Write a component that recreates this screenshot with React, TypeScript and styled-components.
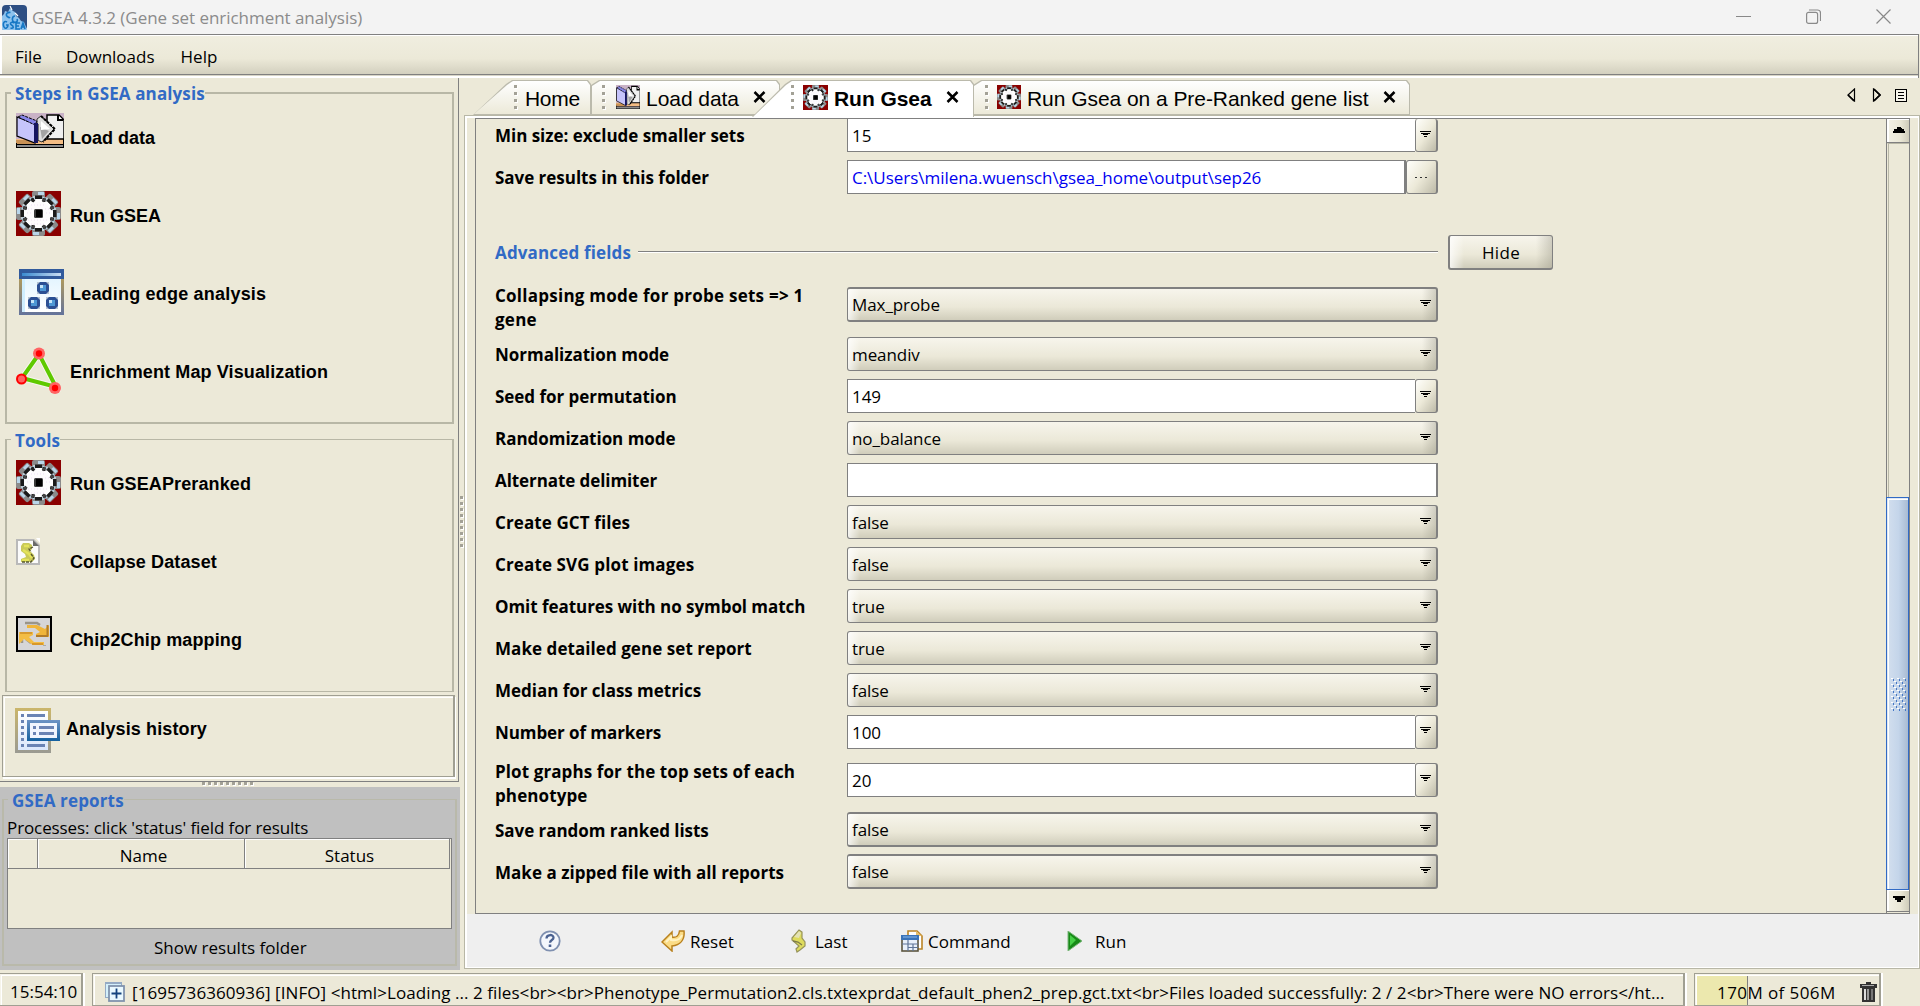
import React from 'react';
import styled, { createGlobalStyle, css } from 'styled-components';

const BG = '#ece9d8';
const EDGE = '#808080';
const SOFT = '#b8b7a6';
const UI = '"Open Sans", "Noto Sans", sans-serif';
const ARIAL = '"Liberation Sans", Arial, sans-serif';

const GlobalStyle = createGlobalStyle`
  * { box-sizing: border-box; }
  body { margin: 0; background: ${BG}; overflow: hidden; }
  svg { display: block; flex: none; }
`;

const Window = styled.div`
  width: 1920px;
  height: 1006px;
  display: flex;
  flex-direction: column;
  background: ${BG};
  font: 17px/22px ${UI};
  color: #000;
  white-space: nowrap;
  overflow: hidden;
`;

/* ---------- title and menu bars ---------- */

const TitleBar = styled.header`
  height: 34px;
  flex: none;
  display: flex;
  align-items: center;
  padding: 0 29px 0 2px;
  background: #f3f3f3;
  color: #8b8b8b;
`;
const WindowTitle = styled.span`
  flex: 1;
  margin-left: 5px;
  padding-top: 1px;
  letter-spacing: -0.04px;
`;
const WindowButtons = styled.div`
  display: flex;
  align-items: center;
  gap: 55px;
  padding-bottom: 1px;
`;
const MenuBar = styled.nav`
  height: 44px;
  flex: none;
  display: flex;
  align-items: center;
  gap: 24px;
  padding: 2px 0 0 15px;
  margin-right: 1px;
  border-top: 1px solid ${EDGE};
  border-right: 1px solid ${EDGE};
  background:
    linear-gradient(#fff, #fff) 0 0 / 100% 1px no-repeat,
    linear-gradient(#fff, #fff) 0 0 / 2px 39px no-repeat,
    linear-gradient(${EDGE}, ${EDGE}) 0 39px / 100% 1px no-repeat,
    linear-gradient(#d8d5c6, #d8d5c6) 0 40px / 100% 1px no-repeat,
    linear-gradient(#fff, #fff) 0 41px / 100% 2px no-repeat,
    linear-gradient(#f0eee0 0, ${BG} 55%, #d2cfbe 92%);
`;
const MenuItem = styled.span<{ $gap?: number }>`
  margin: 0 ${p => p.$gap ?? 0}px 1px 0;
`;

/* ---------- left side ---------- */

const Body = styled.div`
  flex: 1;
  min-height: 0;
  display: flex;
`;
const Side = styled.aside`
  width: 460px;
  flex: none;
  display: flex;
  flex-direction: column;
`;
const StepsPane = styled.div`
  width: 459px;
  height: 704px;
  flex: none;
  padding-top: 14px;
  border-right: 1px solid ${EDGE};
  border-bottom: 1px solid ${EDGE};
`;
const Group = styled.section<{ $height: number; $thin?: boolean }>`
  width: 449px;
  height: ${p => p.$height}px;
  margin: 0 0 15px 5px;
  border: 2px solid ${SOFT};
  border-top-width: ${p => (p.$thin ? 1 : 2)}px;
  border-bottom-width: ${p => (p.$thin ? 1 : 2)}px;
`;
const GroupTitle = styled.h2<{ $bg?: string; $lift?: number; $after?: number; $tight?: number }>`
  width: fit-content;
  height: 20px;
  margin: -${p => p.$lift ?? 10}px 0 ${p => p.$after ?? 9}px 4px;
  padding-left: 4px;
  background: ${p => p.$bg ?? BG};
  color: #316ac5;
  font: 700 17px/20px ${UI};
  letter-spacing: ${p => p.$tight ?? 0.12}px;
`;
const StepRow = styled.div`
  height: 78px;
  display: flex;
  align-items: flex-start;
  padding-left: 9px;
`;
const IconSlot = styled.span<{ $width?: number; $indent?: number }>`
  width: ${p => p.$width ?? 54}px;
  flex: none;
  padding-left: ${p => p.$indent ?? 0}px;
`;
const StepLabel = styled.span<{ $drop?: number; $track?: number }>`
  margin-top: ${p => p.$drop ?? 14}px;
  font: 700 18px/22px ${ARIAL};
  letter-spacing: ${p => p.$track ?? 0.12}px;
`;
const HistoryBox = styled.div`
  width: 453px;
  height: 82px;
  margin: -12px 0 0 2px;
  padding: 12px 0 0 12px;
  display: flex;
  align-items: flex-start;
  border: 1px solid #a09f92;
  border-right-width: 2px;
  box-shadow: inset 1px 1px 0 #f4f2e8, inset 2px 2px 0 #fff, 1px 2px 0 #fff;
`;
const GripRow = styled.div`
  height: 5px;
  flex: none;
  padding-left: 202px;
  display: flex;
  gap: 3px;
`;
const GripColumn = styled.div`
  width: 4px;
  padding-top: 418px;
  display: flex;
  flex-direction: column;
  gap: 3px;
`;
const Dot = styled.i`
  width: 3px;
  height: 3px;
  flex: none;
  background: #a3a196;
  box-shadow: 1px 1px 0 #fff;
`;
const Reports = styled.section`
  height: 183px;
  flex: none;
  padding: 12px 3px 4px 2px;
  background: #c0c0c0;
`;
const ReportsFrame = styled.div`
  height: 167px;
  border: 2px solid #b9b9aa;
  border-top-width: 1px;
`;
const ReportsHint = styled.div`
  margin: 6px 0 0 3px;
  height: 21px;
  line-height: 22px;
  letter-spacing: -0.1px;
`;
const Table = styled.div`
  width: 445px;
  height: 91px;
  margin-left: 3px;
  border: 1px solid ${EDGE};
  background: ${BG};
`;
const TableHead = styled.div`
  display: grid;
  grid-template-columns: 30px 207px 205px;
  height: 30px;
`;
const HeadCell = styled.span`
  display: flex;
  align-items: center;
  justify-content: center;
  padding: 4px 0 0 5px;
  border-right: 1px solid ${EDGE};
  border-bottom: 1px solid ${EDGE};
  box-shadow: inset 1px 1px 0 #fff;
`;
const ShowFolder = styled.div`
  margin: 8px 0 0 150px;
`;

/* ---------- right side: tabs ---------- */

const Main = styled.main`
  width: 1456px;
  display: flex;
  flex-direction: column;
`;
const TabStrip = styled.div`
  height: 37px;
  flex: none;
  display: flex;
  align-items: flex-end;
  justify-content: space-between;
`;
const Tabs = styled.div`
  display: flex;
  padding-left: 9px;
`;
const SLANT = 'polygon(0 100%, 33px 4px, 39px 0, calc(100% - 3px) 0, 100% 4px, 100% 100%)';
const SQUARE = 'polygon(0 100%, 0 5px, 8px 0, calc(100% - 3px) 0, 100% 4px, 100% 100%)';
const Tab = styled.div<{ $width: number; $slant?: boolean; $active?: boolean; $pad: number; $overlap?: number }>`
  position: relative;
  width: ${p => p.$width}px;
  height: ${p => (p.$active ? 37 : 35)}px;
  margin: 0 0 ${p => (p.$active ? -2 : 0)}px -${p => p.$overlap ?? 0}px;
  padding: 5px 0 0 ${p => p.$pad}px;
  display: flex;
  align-items: flex-start;
  font: ${p => (p.$active ? 700 : 400)} 21px/24px ${ARIAL};
  z-index: ${p => (p.$active ? 1 : 0)};
  isolation: isolate;
  &::before, &::after {
    content: '';
    position: absolute;
    z-index: -1;
    clip-path: ${p => (p.$slant ? SLANT : SQUARE)};
  }
  &::before { inset: 0; background: #bbbaac; }
  &::after {
    inset: 1px 1px ${p => (p.$active ? 0 : 1)}px 1px;
    background: ${p => (p.$active ? '#fff' : `linear-gradient(#fff, #f5f4ec 50%, ${BG})`)};
  }
`;
const TabGrip = styled.span`
  width: 3px;
  display: flex;
  flex-direction: column;
  gap: 4px;
`;
const TabIcon = styled.span<{ $left?: number }>`
  margin-left: ${p => p.$left ?? 9}px;
`;
const TabText = styled.span<{ $left?: number; $track?: number }>`
  margin: 2px 0 0 ${p => p.$left ?? 6}px;
  letter-spacing: ${p => p.$track ?? -0.05}px;
`;
const TabClose = styled.span<{ $left: number }>`
  margin: 6px 0 0 ${p => p.$left}px;
`;
const TabNav = styled.div`
  display: flex;
  align-items: center;
  gap: 14px;
  padding: 0 13px 13px 0;
`;
const NavPair = styled.div`
  display: flex;
  gap: 16px;
`;
const TabPage = styled.div`
  flex: 1;
  min-height: 0;
  margin-bottom: 1px;
  border: 1px solid ${SOFT};
  display: flex;
  flex-direction: column;
  background:
    linear-gradient(#fff, #fff) 0 0 / 100% 2px no-repeat,
    linear-gradient(#fff, #fff) 0 0 / 2px 100% no-repeat,
    linear-gradient(#fff, #fff) 100% 0 / 1px 100% no-repeat,
    linear-gradient(#fff, #fff) 0 100% / 100% 1px no-repeat;
  padding: 2px 1px 1px 2px;
`;
const ScrollBox = styled.div`
  height: 796px;
  flex: none;
  margin: 0 8px;
  border: 1px solid ${EDGE};
  display: flex;
`;

/* ---------- form ---------- */

const Form = styled.div`
  flex: 1;
  overflow: hidden;
  padding-left: 19px;
`;
const Field = styled.div<{ $double?: boolean; $first?: boolean }>`
  height: ${p => (p.$double ? 55 : p.$first ? 37 : 42)}px;
  display: flex;
  align-items: flex-start;
  padding-top: ${p => (p.$double ? 9 : p.$first ? 0 : 4)}px;
`;
const FieldLabel = styled.label<{ $top?: number; $track?: number }>`
  width: 352px;
  flex: none;
  margin-top: ${p => p.$top ?? 6}px;
  font: 700 17px/24px ${UI};
  letter-spacing: ${p => p.$track ?? -0.03}px;
  white-space: pre-line;
`;
const Combo = styled.div<{ $thick?: boolean }>`
  width: 591px;
  height: ${p => (p.$thick ? 35 : 34)}px;
  display: flex;
  justify-content: space-between;
  padding: ${p => (p.$thick ? 5 : 6)}px 5px 0 4px;
  border: solid ${EDGE};
  border-width: ${p => (p.$thick ? '2px 2px 2px 1px' : '1px 2px 1px 1px')};
  border-radius: 3px;
  background:
    linear-gradient(90deg, rgba(255,255,255,.75), rgba(255,255,255,0) 12px),
    linear-gradient(270deg, rgba(150,148,132,.4), rgba(150,148,132,0) 14px),
    linear-gradient(#f7f5ec, #ebe8d8 58%, #d0cdbb);
  svg { margin-top: 6px; }
`;
const Value = styled.span`
  letter-spacing: -0.08px;
`;
const TextBox = styled.div<{ $width: number; $joined?: boolean; $short?: boolean }>`
  width: ${p => p.$width}px;
  height: ${p => (p.$short ? 33 : 34)}px;
  padding: 6px 0 0 4px;
  border: 1px solid ${EDGE};
  border-right-width: ${p => (p.$joined ? 0 : 2)}px;
  border-top-width: ${p => (p.$short ? 0 : 1)}px;
  background: #fff;
`;
const PathValue = styled.span`
  color: #0000f0;
  letter-spacing: -0.03px;
`;
const SmallButton = styled.div<{ $width: number; $short?: boolean }>`
  width: ${p => p.$width}px;
  height: ${p => (p.$short ? 33 : 34)}px;
  display: flex;
  align-items: center;
  justify-content: center;
  padding: 0 1px ${p => (p.$short ? 2 : 3)}px 0;
  border: solid ${EDGE};
  border-width: ${p => (p.$short ? 0 : 1)}px 2px 1px 1px;
  border-radius: 3px;
  background: linear-gradient(125deg, #fffffb, #ece9d8 50%, #bdbaa8);
`;
const Ellipsis = styled.span`
  display: flex;
  gap: 3px;
  margin-top: 3px;
  i { width: 2px; height: 1px; background: #333; }
`;
const AdvancedRow = styled.div`
  height: 80px;
  display: flex;
  align-items: flex-start;
  padding-top: 37px;
`;
const AdvancedHead = styled.div`
  width: 953px;
  display: flex;
`;
const AdvancedTitle = styled.h2`
  margin: 6px 0 0;
  font: 700 17px/24px ${UI};
  letter-spacing: 0.15px;
  color: #316ac5;
`;
const Rule = styled.hr`
  width: 800px;
  height: 2px;
  margin: 16px 10px 0 auto;
  border: 0;
  border-top: 1px solid ${EDGE};
  background: #fff;
`;
const HideButton = styled.button`
  width: 105px;
  height: 35px;
  padding: 1px 0 0;
  border: solid ${EDGE};
  border-width: 1px 1px 2px 2px;
  border-radius: 3px;
  font: 17px/22px ${UI};
  letter-spacing: 0.3px;
  color: #000;
  background:
    linear-gradient(90deg, rgba(255,255,255,.75), rgba(255,255,255,0) 14px),
    linear-gradient(270deg, rgba(150,148,132,.4), rgba(150,148,132,0) 16px),
    linear-gradient(#f7f5ec, #ebe8d8 58%, #d0cdbb);
`;

/* ---------- scroll bar ---------- */

const ScrollBar = styled.div`
  width: 23px;
  flex: none;
  display: flex;
  flex-direction: column;
  border-left: 1px solid ${EDGE};
`;
const ArrowButton = styled.div<{ $down?: boolean }>`
  height: ${p => (p.$down ? 22 : 24)}px;
  flex: none;
  display: flex;
  align-items: center;
  justify-content: center;
  padding: 0 0 ${p => (p.$down ? 2 : 3)}px 2px;
  border-bottom: 1px solid ${EDGE};
  box-shadow: inset 2px 1px 0 #fff;
  background: linear-gradient(90deg, #f3f1e6, #eae7d6 60%, #cfccba);
`;
const Track = styled.div`
  flex: 1;
  border-top: 1px solid ${SOFT};
  border-left: 1px solid ${BG};
  background: linear-gradient(${SOFT}, ${SOFT}) 0 0 / 1px 100% no-repeat;
`;
const Thumb = styled.div`
  height: 393px;
  flex: none;
  margin-left: -1px;
  display: flex;
  justify-content: center;
  padding: 180px 0 0 1px;
  border: 1px solid #316ac5;
  box-shadow: inset 1px 1px 0 #dfe8f4, inset 2px 2px 0 #fff;
  background: linear-gradient(90deg, #d3dfee, #c4d5ea 55%, #a9bbd2);
`;
const ScrollPad = styled.div`
  height: 1px;
`;

/* ---------- actions and status ---------- */

const Actions = styled.div`
  flex: 1;
  display: flex;
  align-items: center;
  padding: 0 0 0 72px;
  background: #efefef;
`;
const Action = styled.div<{ $width: number; $gap?: number }>`
  width: ${p => p.$width}px;
  display: flex;
  align-items: center;
  gap: ${p => p.$gap ?? 5}px;
`;
const ActionText = styled.span`
  padding-top: 2px;
`;
const StatusSpacer = styled.div`
  height: 3px;
  flex: none;
`;
const StatusBar = styled.footer`
  height: 33px;
  flex: none;
  display: flex;
  gap: 9px;
`;
const StatusCell = styled.div<{ $width: number; $pad: number; $memory?: boolean }>`
  width: ${p => p.$width}px;
  height: 33px;
  display: flex;
  align-items: center;
  padding: 5px 0 0 ${p => p.$pad}px;
  border: 1px solid #a09f92;
  border-right-width: 2px;
  box-shadow: inset 1px 1px 0 #f6f4ea, inset 2px 2px 0 #fff, 2px 0 0 #fff;
  ${p => p.$memory && css`
    background: linear-gradient(90deg, #ece8ae 52px, ${EDGE} 52px, ${EDGE} 53px, ${BG} 53px);
  `}
`;
const ClockCell = styled(StatusCell)`
  border-left: 0;
`;
const LogText = styled.span`
  margin: 1px 0 0 7px;
  letter-spacing: 0.072px;
`;
const MemoryText = styled.span`
  width: 143px;
  margin-top: 1px;
  letter-spacing: 0.42px;
`;

/* ---------- icons ---------- */

const AppIcon = () => (
  <svg width="25" height="25" viewBox="0 0 25 25">
    <rect width="25" height="25" rx="4" fill="#2e4f83" />
    <path d="M0 25V11l2-2 1-3 3 1 2-4 3 3 2 1 1 4 3 2 2 3 3 1 2 5 1 3z" fill="#8ec3ee" />
    <path d="M8.500 7.500c-3-.5-4.500 1-4 3s3 2 3.500 2.500M13 11c-3 0-3.500 5-1 6s4-1 3-3M5 17c-3-2-4.500 2-3 5s4 0 4-2H4M12.500 18c-4-2-5 1-3 2s3 4-1 3M18 18h-4v6h4M14 21h3M19 24l2-6 2 6M20 22h2" fill="none" stroke="#1677c4" strokeWidth="1.6" />
    <path d="M8 1l2 4M13 8l3 3" stroke="#fff" strokeWidth="1.2" />
  </svg>
);
const LoadIcon = ({ w = 48, h = 35 }: { w?: number; h?: number }) => (
  <svg width={w} height={h} viewBox="0 0 48 35" preserveAspectRatio="none">
    <rect width="48" height="35" fill="#c9b2c6" />
    <rect y="26" width="48" height="5" fill="#f4bd84" />
    <path d="M0 27h12l7 4H0z" fill="#c99255" />
    <path d="M31 2h12l5 5v19H31z" fill="#f0f0f0" stroke="#000" strokeWidth="1.500" />
    <path d="M42 2v5h5" fill="#fff" stroke="#000" strokeWidth="2" />
    <path d="M21 6l4-3 13 13-12 13-5-2z" fill="#dedede" stroke="#333" strokeWidth="1" />
    <path d="M25 3l14 13-12 13" fill="none" stroke="#000" strokeWidth="2" strokeDasharray="3 1" />
    <path d="M24 14l9 4-7 8z" fill="#a3a3a3" /><path d="M25 8l9 8-9 1z" fill="#fff" />
    <path d="M1 4l18 7v19L1 23z" fill="#c6c4fb" stroke="#000" strokeWidth="1.200" />
    <path d="M2 4l4-2 15 6-2 4z" fill="#8785e8" stroke="#000" strokeWidth="1" strokeDasharray="3 1" />
    <path d="M20 10v20" stroke="#151560" strokeWidth="4" /><path d="M22.500 11v16" stroke="#777" strokeWidth="1" />
    <path d="M0 31.700h48" stroke="#000" strokeWidth="1.300" /><rect y="32" width="48" height="3" fill="#8c8c8c" />
    <path d="M0 34.500h48M.5 30v5M47.500 26v9" stroke="#000" />
  </svg>
);
const EIGHTHS = [0, 45, 90, 135, 180, 225, 270, 315];
const GearIcon = ({ s = 45 }: { s?: number }) => (
  <svg width={s} height={s} viewBox="0 0 45 45">
    <rect width="45" height="45" fill="#8a0000" />
    <circle cx="22.500" cy="22.500" r="16" fill="#a9b4bd" />
    {EIGHTHS.map(a => (
      <g key={a} transform={`rotate(${a} 22.500 22.500)`}>
        <rect x="16" y="0" width="13" height="9" rx="2" fill="#8b8b8b" />
        <rect x="22" y="1" width="6" height="3" fill="#b9d6ea" />
        <rect x="17" y="5" width="4" height="3" fill="#c9c9c9" />
      </g>
    ))}
    {EIGHTHS.map(a => (
      <g key={a} transform={`rotate(${a + 22.5} 22.500 22.500)`}>
        <rect x="20" y="5" width="5" height="4" fill="#b5cfe0" />
      </g>
    ))}
    <circle cx="22.500" cy="22.500" r="14.500" fill="#fdfcfd" />
    {EIGHTHS.map(a => (
      <g key={a} transform={`rotate(${a} 22.500 22.500)`}>
        <rect x="19" y="4.500" width="7" height="3.500" fill="#1a1a1a" />
        <rect x="20" y="8" width="6" height="3" fill="#fff" />
        <rect x="26.500" y="7" width="3" height="4" fill="#222" />
        <rect x="15.500" y="7" width="2.500" height="4" fill="#444" />
      </g>
    ))}
    <path d="M15 14h15M12 18h5M29 18h5M11 22h5M30 22h5M12 29h21M15 33h15" stroke="#efdff5" strokeDasharray="1 2" />
    <rect x="18" y="18" width="9" height="9" rx="1.500" fill="#3a3a3a" />
    <rect x="20" y="19" width="6" height="7" fill="#000" />
  </svg>
);
const LeadingIcon = () => (
  <svg width="45" height="46" viewBox="0 0 45 46">
    <defs>
      <linearGradient id="le-frame" x2="0" y2="1"><stop offset=".2" stopColor="#b09a5c" /><stop offset="1" stopColor="#63739c" /></linearGradient>
      <linearGradient id="le-bar"><stop stopColor="#3b8bd0" /><stop offset="1" stopColor="#c9dcf2" /></linearGradient>
      <linearGradient id="le-page" x2="0" y2="1"><stop stopColor="#e4f5ff" /><stop offset="1" stopColor="#fff" /></linearGradient>
    </defs>
    <rect width="45" height="46" fill="url(#le-frame)" />
    <rect width="45" height="10" fill="#315a9c" />
    <rect x="3" y="4" width="39" height="3" fill="url(#le-bar)" />
    <rect x="3" y="10" width="39" height="33" fill="url(#le-page)" />
    <path d="M4.500 10v33" stroke="#cfeeff" strokeWidth="3" />
    {[[24, 19], [15, 34], [33, 34]].map(([x, y]) => (
      <g key={`${x}-${y}`}>
        <rect x={x - 6} y={y - 6} width="12" height="12" fill="#b5c2d0" />
        <path d={`M${x - 3} ${y - 6}h6l3 3v6l-3 3h-6l-3-3v-6z`} fill="#2b4f93" />
        <rect x={x - 3} y={y - 3} width="6" height="6" fill="#4d97d4" /><rect x={x - 3} y={y - 3} width="3" height="3" fill="#c5e4f7" />
      </g>
    ))}
  </svg>
);
const MapIcon = () => (
  <svg width="45" height="47" viewBox="0 0 45 47">
    <path d="M23 7L6 31l34 9z" fill="none" stroke="#fff" strokeOpacity=".6" strokeWidth="6" />
    <path d="M23 7L6 31l34 9z" fill="none" stroke="#5fc900" strokeWidth="4" />
    <circle cx="23" cy="6.500" r="6" fill="#ff6464" /><circle cx="23" cy="6.500" r="3.200" fill="#f00" />
    <circle cx="5.500" cy="32" r="4.500" fill="#ff6464" stroke="#f00" strokeWidth="2" />
    <circle cx="39" cy="41" r="6" fill="#ff6464" /><circle cx="39" cy="41" r="3.200" fill="#f00" />
  </svg>
);
const CollapseIcon = () => (
  <svg width="24" height="27" viewBox="0 0 24 27">
    <path d="M0 1h18l6 6v20H0z" fill="#b9b9b9" /><path d="M2 3h15l5 5v17H2z" fill="#fbfbfb" />
    <path d="M20 0h4v5z" fill="#fff" /><path d="M17 2l6 6h-6z" fill="#6a6a6a" />
    <path d="M16 7l-3-2H7L5 8v5l4 3 1 3-5 2v3h11l3-3-1-4-4-4 2-2z" fill="#c9c95a" />
    <path d="M8 8h5M7 12l6 4 3 4M6 22h7" fill="none" stroke="#e3e35a" strokeWidth="2.400" />
    <path d="M17 9l-4 2 2 3M15 16l3 4-3 4H6" fill="none" stroke="#55552f" strokeWidth="1.300" strokeDasharray="3 1" />
  </svg>
);
const ChipIcon = () => (
  <svg width="36" height="36" viewBox="0 0 36 36">
    <rect x="1" y="1" width="34" height="34" fill="#d6d6d8" stroke="#000" strokeWidth="2" />
    <path d="M9 7h12l3 2M6 27v-3M15 27l-5-4" fill="none" stroke="#9a958a" strokeWidth="2.500" />
    <path d="M33 9v12H20v-3l4-2-5-4h-8V9h10l8 4z" fill="#f0b53a" />
    <path d="M31.500 9v11M20 20h12" stroke="#b27c28" strokeWidth="2" />
    <path d="M3 28V16h14v3l-4 2 5 5h10v3H17l-9-6z" fill="#f3bd45" />
    <path d="M4 17h12" stroke="#d79a30" strokeWidth="2" /><path d="M16 28h11" stroke="#cf8d25" strokeWidth="1.500" />
    <path d="M27 29.500h3" stroke="#aaa" />
  </svg>
);
const HistoryIcon = () => (
  <svg width="45" height="45" viewBox="0 0 45 45">
    <defs>
      <linearGradient id="hi-f" x2="0" y2="1"><stop stopColor="#cbb66b" /><stop offset="1" stopColor="#9a9a92" /></linearGradient>
      <linearGradient id="hi-b" x2="0" y2="1"><stop stopColor="#6d93c4" /><stop offset="1" stopColor="#14609f" /></linearGradient>
      <linearGradient id="hi-p" x2="0" y2="1"><stop stopColor="#fff" /><stop offset="1" stopColor="#dbe7fb" /></linearGradient>
    </defs>
    <rect width="36" height="45" fill="url(#hi-f)" /><rect x="3" y="3" width="30" height="39" fill="url(#hi-p)" />
    <path d="M6 7.500h3m3 0h18M6 13.500h3M6 19.500h3M6 25.500h3M6 31.500h3M6 37.500h3m3 0h18" stroke="#6a83b4" strokeWidth="3" />
    <rect x="12" y="12" width="33" height="21" fill="url(#hi-b)" /><rect x="15" y="15" width="27" height="15" fill="#f0f5fe" />
    <path d="M18 19.500h3m3 0h15M18 25.500h3m3 0h15" stroke="#6a83b4" strokeWidth="3" />
  </svg>
);
const CloseX = () => (
  <svg width="13" height="12" viewBox="0 0 13 12"><path d="M1.500 1l10 10M11.500 1l-10 10" stroke="#000" strokeWidth="2.500" /></svg>
);
const DropArrow = () => (
  <svg width="11" height="7" viewBox="0 0 11 7" shapeRendering="crispEdges">
    <path d="M0 0h11v1H0zM1 2h9v1H1zM3 3h5v1H3zM4 5h3v1H4z" />
  </svg>
);
const ScrollArrow = ({ down }: { down?: boolean }) => (
  <svg width="12" height="7" viewBox="0 0 12 7" shapeRendering="crispEdges">
    <path d={down ? 'M0 0h12v2h-2v2H8v2H4V4H2V2H0z' : 'M4 1h4v1h1v1h2v2h1v2H0V5h1V3h3z'} />
  </svg>
);
const ThumbGrip = () => (
  <svg width="15" height="34" viewBox="0 0 15 34" shapeRendering="crispEdges">
    {Array.from({ length: 11 }, (_, i) =>
      (i % 2 ? [3, 9] : [0, 6, 12]).map(x => (
        <g key={`${i}-${x}`}><rect x={x} y={i * 3} width="2" height="1" fill="#fff" /><rect x={x + 2} y={i * 3 + 1} width="1" height="2" fill="#4577c6" /></g>
      )))}
  </svg>
);
const HelpIcon = () => (
  <svg width="22" height="22" viewBox="0 0 22 22">
    <circle cx="11" cy="11" r="9.700" fill="#f4f7fc" stroke="#7f90b0" strokeWidth="1.800" />
    <path d="M7.500 8.500c0-4.500 7-4.500 7-.8 0 2.300-3.500 2.300-3.500 5" fill="none" stroke="#4b6291" strokeWidth="2.300" />
    <rect x="9.700" y="14.500" width="2.600" height="2.500" fill="#4b6291" />
  </svg>
);
const ResetIcon = () => (
  <svg width="24" height="22" viewBox="0 0 24 22">
    <path d="M1 12l10-10v5c4 1 7-1 7.500-6H23c1 9-4 14-12 15v5z" fill="#fbdc86" stroke="#b9811d" strokeWidth="1.500" />
    <path d="M5 12l5-5v3c5 1 9 0 11-5" fill="none" stroke="#fff3c4" strokeWidth="2" />
  </svg>
);
const LastIcon = () => (
  <svg width="16" height="24" viewBox="0 0 16 24">
    <path d="M9 1l3 2v6l3 4v4l-5 4-3 2-1-3 3-3-7-6V9z" fill="#dedb5c" stroke="#96935c" strokeWidth="1.200" />
    <path d="M9 2L4 8l5 1 2-5z" fill="#e4e2b4" /><path d="M3 12l5 1 4 3" fill="none" stroke="#7d7a4a" strokeWidth="1.300" />
  </svg>
);
const CommandIcon = () => (
  <svg width="22" height="22" viewBox="0 0 22 22">
    <path d="M7 1h9l5 5v13H7z" fill="#fff" stroke="#bb8425" strokeWidth="1.600" /><path d="M15 1v5h6z" fill="#e8bf6a" />
    <rect x="1" y="6" width="16" height="15" fill="#e8f0fa" stroke="#5c563f" strokeWidth="1.600" />
    <rect x="0" y="5" width="18" height="5" fill="#3a73b8" /><path d="M2 7h14" stroke="#8ab8e8" />
    <path d="M7 10v11M1 14h16M12 14v7M7 17.500h10" stroke="#5f7597" strokeWidth="1.200" />
  </svg>
);
const RunIcon = () => (
  <svg width="16" height="20" viewBox="0 0 16 20">
    <path d="M1 0l14 10L1 20z" fill="#178a17" stroke="#7db77d" /><path d="M3 4l6 5-6 6z" fill="#46d046" />
  </svg>
);
const LogIcon = () => (
  <svg width="20" height="20" viewBox="0 0 20 20">
    <rect x=".5" y=".5" width="16" height="15" fill="#d4f0fb" stroke="#94aac4" /><path d="M0 1h16" stroke="#94aac4" strokeWidth="2" />
    <rect x="4" y="4" width="15" height="15" fill="#e9f9ff" stroke="#8193ad" strokeWidth="1.800" />
    <path d="M6.500 11.500h10M11.500 6.500v10" stroke="#14447e" strokeWidth="1.800" />
  </svg>
);
const TrashIcon = () => (
  <svg width="17" height="20" viewBox="0 0 17 20">
    <path d="M6 0h5v2h6v4H0V2h6z" fill="#333" /><path d="M2 3.500h12" stroke="#aaa" />
    <path d="M2 6h13v14H2z" fill="#333" /><rect x="4" y="7" width="2" height="11" fill="#ddd" /><rect x="7" y="7" width="2" height="11" fill="#999" /><rect x="11" y="7" width="2" height="11" fill="#777" />
  </svg>
);
const MinimizeIcon = () => <svg width="15" height="15"><path d="M0 7.500h15" stroke="#888" /></svg>;
const RestoreIcon = () => (
  <svg width="15" height="15" fill="none" stroke="#8a8a8a" strokeWidth="1.200"><rect x=".6" y="3.400" width="11" height="11" rx="2" /><path d="M3 1h8.500a3 3 0 013 3V12" /></svg>
);
const CloseIcon = () => <svg width="15" height="15"><path d="M.5.500l14 14M14.500.500l-14 14" stroke="#888" strokeWidth="1.200" /></svg>;
const NavArrow = ({ right }: { right?: boolean }) => (
  <svg width="9" height="14" viewBox="0 0 9 14">
    <path d={right ? 'M1.500 1v12L8 7z' : 'M7.500 1v12L1 7z'} fill="none" stroke="#000" strokeWidth="1.200" />
    <path d={right ? 'M2 1L8 7l-6 6' : 'M7 13L1 7'} fill="none" stroke="#000" strokeWidth="1.600" />
  </svg>
);
const ListIcon = () => (
  <svg width="12" height="13" shapeRendering="crispEdges"><rect x=".5" y=".5" width="11" height="12" fill="#f6f4ea" stroke="#000" /><path d="M3 3.500h6M3 6.500h6M3 9.500h6" stroke="#000" /></svg>
);

/* ---------- data ---------- */

type Kind = 'combo' | 'spin' | 'text';
interface Row { label: string; value: string; kind: Kind; double?: boolean; thick?: boolean; track?: number; top?: number }

const rows: Row[] = [
  { label: 'Collapsing mode for probe sets => 1\ngene', value: 'Max_probe', kind: 'combo', double: true, thick: true, track: 0.25, top: -3 },
  { label: 'Normalization mode', value: 'meandiv', kind: 'combo' },
  { label: 'Seed for permutation', value: '149', kind: 'spin' },
  { label: 'Randomization mode', value: 'no_balance', kind: 'combo' },
  { label: 'Alternate delimiter', value: '', kind: 'text', track: -0.08 },
  { label: 'Create GCT files', value: 'false', kind: 'combo', track: 0.1 },
  { label: 'Create SVG plot images', value: 'false', kind: 'combo', track: 0.13 },
  { label: 'Omit features with no symbol match', value: 'true', kind: 'combo', track: -0.05 },
  { label: 'Make detailed gene set report', value: 'true', kind: 'combo', track: 0.06 },
  { label: 'Median for class metrics', value: 'false', kind: 'combo' },
  { label: 'Number of markers', value: '100', kind: 'spin', track: -0.08 },
  { label: 'Plot graphs for the top sets of each\nphenotype', value: '20', kind: 'spin', double: true, track: 0.1, top: -2 },
  { label: 'Save random ranked lists', value: 'false', kind: 'combo', thick: true, top: 7, track: -0.05 },
  { label: 'Make a zipped file with all reports', value: 'false', kind: 'combo', thick: true, track: 0.03, top: 7 },
];

const LOG = '[1695736360936] [INFO] <html>Loading ... 2 files<br><br>Phenotype_Permutation2.cls.txtexprdat_default_phen2_prep.gct.txt<br>Files loaded successfully: 2 / 2<br>There were NO errors</ht...';

const dots = (n: number) => Array.from({ length: n }, (_, i) => <Dot key={i} />);

const SpinGroup = styled.div<{ $drop?: boolean }>`
  display: flex;
  margin-top: ${p => (p.$drop ? 1 : 0)}px;
`;

const Control = ({ row }: { row: Row }) => {
  if (row.kind === 'combo') {
    return <Combo $thick={row.thick}><Value>{row.value}</Value><DropArrow /></Combo>;
  }
  if (row.kind === 'text') {
    return <TextBox $width={591}>{row.value}</TextBox>;
  }
  return (
    <SpinGroup $drop={row.double}>
      <TextBox $width={568} $joined><Value>{row.value}</Value></TextBox>
      <SmallButton $width={23}><DropArrow /></SmallButton>
    </SpinGroup>
  );
};

export default function App() {
  return (
    <Window>
      <GlobalStyle />
      <TitleBar>
        <AppIcon />
        <WindowTitle>GSEA 4.3.2 (Gene set enrichment analysis)</WindowTitle>
        <WindowButtons><MinimizeIcon /><RestoreIcon /><CloseIcon /></WindowButtons>
      </TitleBar>
      <MenuBar>
        <MenuItem>File</MenuItem>
        <MenuItem $gap={2}>Downloads</MenuItem>
        <MenuItem>Help</MenuItem>
      </MenuBar>

      <Body>
        <Side>
          <StepsPane>
            <Group $height={332}>
              <GroupTitle>Steps in GSEA analysis</GroupTitle>
              <StepRow><IconSlot><LoadIcon /></IconSlot><StepLabel $track={0}>Load data</StepLabel></StepRow>
              <StepRow><IconSlot><GearIcon /></IconSlot><StepLabel $track={0}>Run GSEA</StepLabel></StepRow>
              <StepRow><IconSlot $indent={3}><LeadingIcon /></IconSlot><StepLabel $track={0.2}>Leading edge analysis</StepLabel></StepRow>
              <StepRow><IconSlot><MapIcon /></IconSlot><StepLabel>Enrichment Map Visualization</StepLabel></StepRow>
            </Group>
            <Group $height={253} $thin>
              <GroupTitle $lift={9}>Tools</GroupTitle>
              <StepRow><IconSlot><GearIcon /></IconSlot><StepLabel $drop={13}>Run GSEAPreranked</StepLabel></StepRow>
              <StepRow><IconSlot><CollapseIcon /></IconSlot><StepLabel $drop={13}>Collapse Dataset</StepLabel></StepRow>
              <StepRow><IconSlot><ChipIcon /></IconSlot><StepLabel $drop={13}>Chip2Chip mapping</StepLabel></StepRow>
            </Group>
            <HistoryBox>
              <IconSlot $width={51}><HistoryIcon /></IconSlot>
              <StepLabel $drop={10}>Analysis history</StepLabel>
            </HistoryBox>
          </StepsPane>
          <GripRow>{dots(9)}</GripRow>
          <Reports>
            <ReportsFrame>
              <GroupTitle $bg="#c0c0c0" $tight={0.15} $lift={9} $after={0}>GSEA reports</GroupTitle>
              <ReportsHint>Processes: click 'status' field for results</ReportsHint>
              <Table>
                <TableHead><HeadCell /><HeadCell>Name</HeadCell><HeadCell>Status</HeadCell></TableHead>
              </Table>
              <ShowFolder>Show results folder</ShowFolder>
            </ReportsFrame>
          </Reports>
        </Side>
        <GripColumn>{dots(9)}</GripColumn>

        <Main>
          <TabStrip>
            <Tabs>
              <Tab $width={118} $pad={41} $slant>
                <TabGrip>{dots(4)}</TabGrip>
                <TabText $left={8} $track={-0.3}>Home</TabText>
              </Tab>
              <Tab $width={189} $pad={11}>
                <TabGrip>{dots(4)}</TabGrip>
                <TabIcon $left={11}><LoadIcon w={24} h={24} /></TabIcon>
                <TabText>Load data</TabText>
                <TabClose $left={14}><CloseX /></TabClose>
              </Tab>
              <Tab $width={222} $pad={39} $overlap={28} $slant $active>
                <TabGrip>{dots(4)}</TabGrip>
                <TabIcon><GearIcon s={25} /></TabIcon>
                <TabText>Run Gsea</TabText>
                <TabClose $left={14}><CloseX /></TabClose>
              </Tab>
              <Tab $width={437} $pad={12} $overlap={1}>
                <TabGrip>{dots(4)}</TabGrip>
                <TabIcon><GearIcon s={24} /></TabIcon>
                <TabText>Run Gsea on a Pre-Ranked gene list</TabText>
                <TabClose $left={14}><CloseX /></TabClose>
              </Tab>
            </Tabs>
            <TabNav><NavPair><NavArrow /><NavArrow right /></NavPair><ListIcon /></TabNav>
          </TabStrip>

          <TabPage>
            <ScrollBox>
              <Form>
                <Field $first>
                  <FieldLabel $top={5}>Min size: exclude smaller sets</FieldLabel>
                  <TextBox $width={568} $joined $short><Value>15</Value></TextBox>
                  <SmallButton $width={23} $short><DropArrow /></SmallButton>
                </Field>
                <Field>
                  <FieldLabel>Save results in this folder</FieldLabel>
                  <TextBox $width={559}><PathValue>C:\Users\milena.wuensch\gsea_home\output\sep26</PathValue></TextBox>
                  <SmallButton $width={32}><Ellipsis><i /><i /><i /></Ellipsis></SmallButton>
                </Field>
                <AdvancedRow>
                  <AdvancedHead><AdvancedTitle>Advanced fields</AdvancedTitle><Rule /></AdvancedHead>
                  <HideButton>Hide</HideButton>
                </AdvancedRow>
                {rows.map(row => (
                  <Field key={row.label} $double={row.double}>
                    <FieldLabel $top={row.top} $track={row.track}>{row.label}</FieldLabel>
                    <Control row={row} />
                  </Field>
                ))}
              </Form>
              <ScrollBar>
                <ArrowButton><ScrollArrow /></ArrowButton>
                <Track />
                <Thumb><ThumbGrip /></Thumb>
                <ArrowButton $down><ScrollArrow down /></ArrowButton>
                <ScrollPad />
              </ScrollBar>
            </ScrollBox>
            <Actions>
              <Action $width={122}><HelpIcon /></Action>
              <Action $width={129}><ResetIcon /><ActionText>Reset</ActionText></Action>
              <Action $width={111} $gap={9}><LastIcon /><ActionText>Last</ActionText></Action>
              <Action $width={166}><CommandIcon /><ActionText>Command</ActionText></Action>
              <Action $width={100} $gap={12}><RunIcon /><ActionText>Run</ActionText></Action>
            </Actions>
          </TabPage>
        </Main>
      </Body>

      <StatusSpacer />
      <StatusBar>
        <ClockCell $width={83} $pad={10}>15:54:10</ClockCell>
        <StatusCell $width={1593} $pad={12}><LogIcon /><LogText>{LOG}</LogText></StatusCell>
        <StatusCell $width={187} $pad={22} $memory><MemoryText>170M of 506M</MemoryText><TrashIcon /></StatusCell>
      </StatusBar>
    </Window>
  );
}
